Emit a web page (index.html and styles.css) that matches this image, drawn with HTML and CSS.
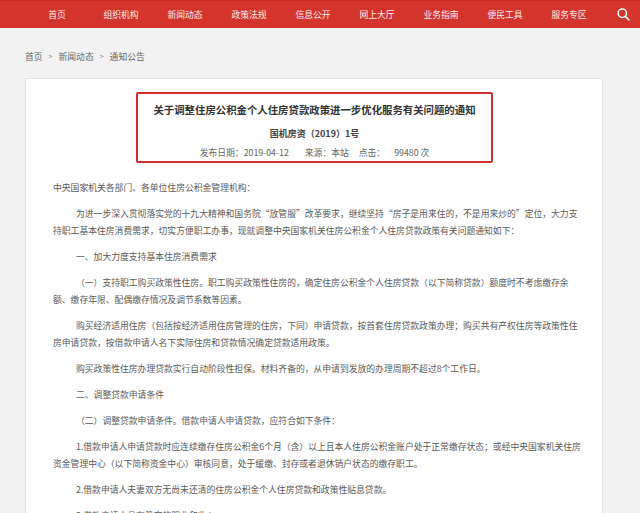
FILE: index.html
```html
<!DOCTYPE html>
<html lang="zh-CN">
<head>
<meta charset="utf-8">
<title>关于调整住房公积金个人住房贷款政策进一步优化服务有关问题的通知</title>
<link rel="stylesheet" href="styles.css">
</head>
<body>
<header class="nav">
  <ul class="nav-list">
    <li>首页</li>
    <li>组织机构</li>
    <li>新闻动态</li>
    <li>政策法规</li>
    <li>信息公开</li>
    <li>网上大厅</li>
    <li>业务指南</li>
    <li>便民工具</li>
    <li>服务专区</li>
  </ul>
  <span class="search">
    <svg width="13" height="13" viewBox="0 0 13 13"><circle cx="5.3" cy="5.3" r="4.2" fill="none" stroke="#fff" stroke-width="1.5"/><line x1="8.4" y1="8.4" x2="12" y2="12" stroke="#fff" stroke-width="1.6" stroke-linecap="round"/></svg>
  </span>
</header>

<nav class="crumbs">
  <span>首页</span><span class="sep">&gt;</span><span>新闻动态</span><span class="sep">&gt;</span><span>通知公告</span>
</nav>

<main class="card">
  <div class="headbox">
    <h1 class="title">关于调整住房公积金个人住房贷款政策进一步优化服务有关问题的通知</h1>
    <div class="docno">国机房资（2019）1号</div>
    <div class="meta">
      <span class="m1">发布日期：2019-04-12</span>
      <span class="m2">来源：本站</span>
      <span class="m3">点击：</span>
      <span class="m4">99480 次</span>
    </div>
  </div>

  <div class="body">
    <p class="noind">中央国家机关各部门、各单位住房公积金管理机构：</p>
    <p>为进一步深入贯彻落实党的十九大精神和国务院“放管服”改革要求，继续坚持“房子是用来住的，不是用来炒的”定位，大力支<br>持职工基本住房消费需求，切实方便职工办事，现就调整中央国家机关住房公积金个人住房贷款政策有关问题通知如下：</p>
    <p>一、加大力度支持基本住房消费需求</p>
    <p>（一）支持职工购买政策性住房。职工购买政策性住房的，确定住房公积金个人住房贷款（以下简称贷款）额度时不考虑缴存余<br>额、缴存年限、配偶缴存情况及调节系数等因素。</p>
    <p>购买经济适用住房（包括按经济适用住房管理的住房，下同）申请贷款，按首套住房贷款政策办理；购买共有产权住房等政策性住<br>房申请贷款，按借款申请人名下实际住房和贷款情况确定贷款适用政策。</p>
    <p>购买政策性住房办理贷款实行自动阶段性担保。材料齐备的，从申请到发放的办理周期不超过8个工作日。</p>
    <p>二、调整贷款申请条件</p>
    <p>（二）调整贷款申请条件。借款申请人申请贷款，应符合如下条件：</p>
    <p>1.借款申请人申请贷款时应连续缴存住房公积金6个月（含）以上且本人住房公积金账户处于正常缴存状态；或经中央国家机关住房<br>资金管理中心（以下简称资金中心）审核同意，处于缓缴、封存或者退休销户状态的缴存职工。</p>
    <p>2.借款申请人夫妻双方无尚未还清的住房公积金个人住房贷款和政策性贴息贷款。</p>
    <p>3.借款申请人具有稳定的职业和收入。</p>
  </div>
</main>
</body>
</html>
```
FILE: styles.css
```css
* { box-sizing: border-box; }
html, body { margin: 0; padding: 0; }
body {
  background: #f2f2f2;
  font-family: "Noto Sans CJK SC", "Noto Sans", sans-serif;
  color: #555;
  overflow: hidden;
}
.nav {
  height: 28px;
  background: #d3352d;
  border-top: 1px solid #c42a23;
  display: flex;
  align-items: center;
}
.nav-list {
  list-style: none;
  margin: 0;
  padding: 0 0 0 25px;
  display: flex;
}
.nav-list li {
  width: 64px;
  text-align: center;
  color: #fbecea;
  font-size: 8.8px;
  line-height: 27px;
}
.search {
  margin-left: 16px;
  display: flex;
  align-items: center;
  height: 27px;
}
.crumbs {
  margin: 0;
  padding: 20px 0 0 25px;
  height: 50px;
  font-size: 8.8px;
  line-height: 17px;
  color: #666;
  display: flex;
  align-items: flex-start;
}
.crumbs .sep {
  font-size: 7px;
  color: #888;
  margin: 0 6px;
}
.card {
  margin-left: 25px;
  width: 578px;
  background: #fff;
  border: 1px solid #e4e4e4;
  border-bottom: none;
  padding: 13px 28px 40px 27px;
  min-height: 460px;
}
.headbox {
  width: 357px;
  margin: 0 auto;
  border: 2px solid #d2312b;
  border-radius: 2px;
  text-align: center;
  padding: 8px 0 0;
  height: 71px;
  position: relative;
  left: 1px;
}
.title {
  margin: 0;
  font-size: 10.4px;
  line-height: 16px;
  font-weight: bold;
  color: #333;
  white-space: nowrap;
}
.docno {
  margin-top: 8px;
  font-size: 9px;
  line-height: 15px;
  font-weight: bold;
  color: #444;
}
.meta {
  margin-top: 4px;
  font-size: 8.8px;
  line-height: 15px;
  color: #666;
  white-space: nowrap;
}
.meta span { display: inline-block; }
.m1 { margin-right: 14px; }
.m2 { margin-right: 8px; }
.m3 { margin-right: 7px; }
.body {
  padding-top: 16px;
  font-size: 8.8px;
  line-height: 17px;
  color: #5a5a5a;
}
.body p {
  margin: 0 0 9px;
  text-indent: 23px;
  white-space: nowrap;
}
.body p.noind { text-indent: 0; }
```
